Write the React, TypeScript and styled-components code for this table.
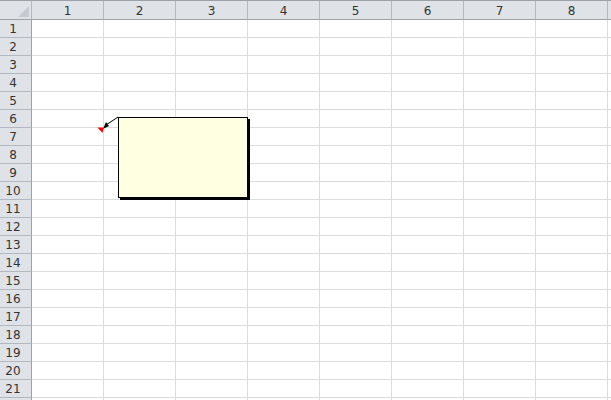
import React from 'react';
import styled, { createGlobalStyle } from 'styled-components';

const COLS = 8;
const ROWS = 21;

const GlobalStyle = createGlobalStyle`
  html, body {
    margin: 0;
    padding: 0;
    background: #fff;
    overflow: hidden;
  }
`;

const Sheet = styled.div`
  position: relative;
  width: 611px;
  height: 400px;
  overflow: hidden;
  font-family: "DejaVu Sans", "Noto Sans CJK JP", sans-serif;
  font-size: 12px;
  color: #333;
`;

const Grid = styled.div`
  display: grid;
  grid-template-columns: 32px repeat(${COLS}, 72px) 72px;
  grid-auto-rows: 18px;
  grid-template-rows: 20px;
`;

const Corner = styled.div`
  position: relative;
  box-sizing: border-box;
  background: #dfe3e8;
  border-top: 1px solid #9ba1a9;
  border-right: 1px solid #b2b8c0;
  border-bottom: 1px solid #9ba1a9;

  &::after {
    content: '';
    position: absolute;
    right: 2px;
    bottom: 2px;
    border-style: solid;
    border-width: 0 0 11px 11px;
    border-color: transparent transparent #c5cad1 transparent;
  }
`;

const ColHead = styled.div`
  box-sizing: border-box;
  display: flex;
  align-items: center;
  justify-content: center;
  background: #dfe3e8;
  border-top: 1px solid #9ba1a9;
  border-right: 1px solid #b2b8c0;
  border-bottom: 1px solid #9ba1a9;
  padding-top: 1px;
`;

const RowHead = styled.div`
  box-sizing: border-box;
  display: flex;
  align-items: center;
  justify-content: center;
  padding-right: 5px;
  background: #dfe3e8;
  border-right: 1px solid #9ba1a9;
  border-bottom: 1px solid #b2b8c0;
`;

const Cell = styled.div`
  box-sizing: border-box;
  background: #fff;
  border-right: 1px solid #dadcdd;
  border-bottom: 1px solid #dadcdd;
`;

const Comment = styled.div`
  position: absolute;
  left: 118px;
  top: 117px;
  width: 130px;
  height: 81px;
  box-sizing: border-box;
  background: #ffffe1;
  border: 1px solid #000;
  box-shadow: 2px 2px 0 #000;
`;

const Connector = styled.svg`
  position: absolute;
  left: 96px;
  top: 112px;
  overflow: visible;
`;

export default function App() {
  const cols = Array.from({ length: COLS + 1 }, (_, i) => i + 1);
  const rows = Array.from({ length: ROWS + 1 }, (_, i) => i + 1);

  return (
    <>
      <GlobalStyle />
      <Sheet>
        <Grid>
          <Corner />
          {cols.map(c => (
            <ColHead key={c}>{c <= COLS ? c : ''}</ColHead>
          ))}
          {rows.map(r => (
            <React.Fragment key={r}>
              <RowHead>{r <= ROWS ? r : ''}</RowHead>
              {cols.map(c => (
                <Cell key={c} />
              ))}
            </React.Fragment>
          ))}
        </Grid>

        <Connector width="24" height="22" viewBox="0 0 24 22">
          <polygon points="1.5,15.5 7.5,15.5 6.5,21" fill="#ff0000" />
          <line x1="22" y1="5" x2="10" y2="13" stroke="#000" strokeWidth="1" />
          <polygon points="7,17 10,10 13,14" fill="#000" />
        </Connector>
        <Comment />
      </Sheet>
    </>
  );
}
